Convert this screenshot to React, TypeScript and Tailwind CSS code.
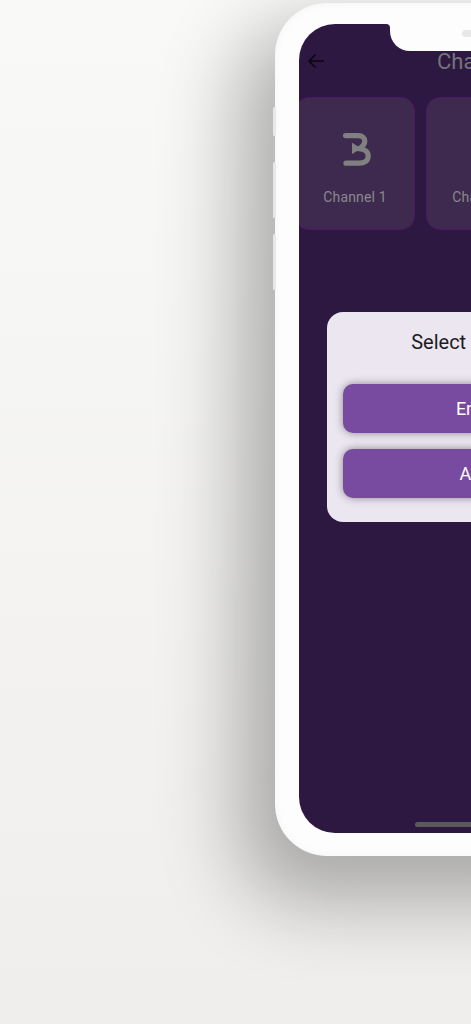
import React from 'react';

const BackArrow: React.FC = () => (
  <svg width="18" height="16" viewBox="0 0 18 16" fill="none" stroke="#0d0612" strokeWidth="1.7">
    <path d="M17 8 H2" />
    <path d="M8.5 1.5 L2 8 L8.5 14.5" />
  </svg>
);

const Logo: React.FC = () => (
  <svg width="28" height="33" viewBox="0 0 28 33" fill="none">
    <path d="M2.5 2.7 H15 C19.8 2.7 21.8 5.4 21.8 8 C21.8 11 19.5 13.6 16.5 15.6 C22 16 25.2 19 25.2 23.2 C25.2 27.6 21.6 30.2 16 30.2 H3" stroke="#808080" strokeWidth="5.2" strokeLinecap="round" />
    <path d="M9 9.8 L18.5 15.6 L9 21 Z" fill="#808080" />
  </svg>
);

const ChannelCard: React.FC<{ name: string; className: string }> = ({ name, className }) => (
  <div className={`h-[133px] shrink-0 flex flex-col items-center rounded-[14px] border border-[#4a1a66] bg-[#3e2a4e] ${className}`}>
    <div className="mt-[35px] ml-[4px] h-[33px]">
      <Logo />
    </div>
    <div className="mt-[21px] text-[14px] tracking-[0.15px] text-[#8a878d]">{name}</div>
  </div>
);

const App: React.FC = () => {
  return (
    <div
      className="relative h-[1024px] w-[471px] overflow-hidden bg-gradient-to-b from-[#f9f9f8] to-[#efeeec] pl-[275px] pt-[3px]"
      style={{ fontFamily: 'Roboto, sans-serif' }}
    >
      {/* phone frame */}
      <div className="relative h-[853px] w-[420px] rounded-[52px] bg-[#fdfdfd] p-[24px] pt-[21px] shadow-[-25px_35px_80px_10px_rgba(0,0,0,0.3),inset_0_0_10px_rgba(0,0,0,0.04)]">
        <div className="absolute left-[-2px] top-[104px] h-[29px] w-[3px] rounded-full bg-[#e8e8e8]" />
        <div className="absolute left-[-2px] top-[159px] h-[56px] w-[3px] rounded-full bg-[#e8e8e8]" />
        <div className="absolute left-[-2px] top-[231px] h-[56px] w-[3px] rounded-full bg-[#e8e8e8]" />

        {/* notch */}
        <div className="absolute left-[115px] top-[18px] z-10 h-[30px] w-[300px] rounded-bl-[20px] bg-[#fdfdfd]">
          <div className="absolute left-[72px] top-[9px] h-[7px] w-[40px] rounded-full bg-[#e8e8e8]" />
        </div>
        <div className="absolute left-[111px] top-[21px] z-10 h-[5px] w-[4px] bg-[#fdfdfd]">
          <div className="h-full w-full rounded-tr-[4px] bg-[#2d1841]" />
        </div>

        {/* screen */}
        <div className="relative flex h-[809px] flex-col overflow-hidden rounded-[36px] bg-[#2d1841]">
          <div className="relative mt-[22px] flex h-[30px] items-center">
            <div className="ml-[8px] flex">
              <BackArrow />
            </div>
            <div className="ml-[112px] text-[22px] text-[#77737b]">Channels</div>
          </div>
          <div className="mt-[21px] -ml-[4px] flex gap-[11px]">
            <ChannelCard name="Channel 1" className="w-[120px]" />
            <ChannelCard name="Channel 2" className="w-[116px]" />
          </div>
          <div className="mt-[82px] ml-[28px] h-[210px] w-[316px] rounded-[16px] bg-[#ece6f0] px-[16px]">
            <div className="pt-[15px] text-center text-[20px] text-[#1c1b1f]">Select Language</div>
            <button className="mt-[27px] h-[49px] w-full rounded-[10px] bg-[#784ba0] text-[18px] text-white shadow-[0_0_8px_rgba(0,0,0,0.42)]">English</button>
            <button className="mt-[16px] h-[49px] w-full rounded-[10px] bg-[#784ba0] text-[18px] text-white shadow-[0_0_8px_rgba(0,0,0,0.42)]">Arabic</button>
          </div>
          <div className="absolute bottom-[6px] left-[116px] h-[5px] w-[135px] rounded-full bg-[#5a5a5a]" />
        </div>
      </div>
    </div>
  );
};

export default App;
